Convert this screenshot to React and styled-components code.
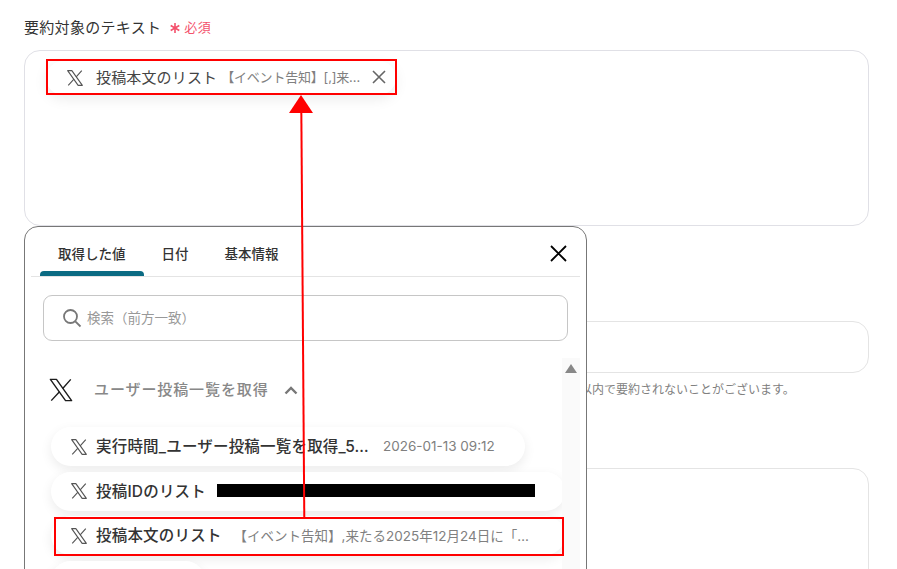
import React from "react";
import styled, {createGlobalStyle} from 'styled-components';

const GlobalStyle = createGlobalStyle`
  html, body {
    margin: 0;
    height: 569px;
    overflow: hidden;
    background: #fff;
    font-family: Inter, "Noto Sans CJK JP", "Noto Sans", sans-serif;
  }
`;

const XLogo = ({size, color, weight = 1.5}) => (
    <svg width={size} height={size} viewBox="0 0 24 24" fill="none" stroke={color} strokeWidth={weight} style={{flexShrink: 0}}>
        <path d="M2.2 2.2H7.8L21.8 21.8H16.2z" strokeLinejoin="round"/>
        <path d="M21 2.2L13.6 10.6M10.6 13.6L3 21.8"/>
    </svg>
);

const rows = [
    {id: 'time', label: '実行時間_ユーザー投稿一覧を取得_5…', value: '2026-01-13 09:12', width: 474, gap: 14},
    {id: 'post', label: '投稿IDのリスト', redacted: true, width: 514, gap: 11},
    {id: 'body', label: '投稿本文のリスト', value: '【イベント告知】,来たる2025年12月24日に「…', width: 514, gap: 12},
    {id: 'lang', width: 154},
];

const App = () => {
    return (
        <Page>
            <GlobalStyle/>
            <FieldLabel>
                要約対象のテキスト
                <Required>
                    <svg width="10" height="10" viewBox="0 0 10 10" stroke="#f4516c" strokeWidth="1.6">
                        <path d="M5 0v10M.7 2.5l8.6 5M9.3 2.5l-8.6 5"/>
                    </svg>
                    必須
                </Required>
            </FieldLabel>
            <TextArea>
                <TokenChip>
                    <XLogo size={18} color="#555"/>
                    <TokenName>投稿本文のリスト</TokenName>
                    <TokenValue>【イベント告知】[,]来…</TokenValue>
                    <TokenClose width="14" height="14" viewBox="0 0 14 14">
                        <path d="M1 1l12 12M13 1L1 13" stroke="#666" strokeWidth="1.6" fill="none"/>
                    </TokenClose>
                </TokenChip>
            </TextArea>
            <ShortInput/>
            <HelpText>指定した文字数以内で要約されないことがございます。</HelpText>
            <TallInput/>

            <Popup>
                <TabBar>
                    <Tab $active>取得した値</Tab>
                    <Tab>日付</Tab>
                    <Tab>基本情報</Tab>
                    <CloseIcon width="19" height="19" viewBox="0 0 19 19">
                        <path d="M2 2l15 15M17 2L2 17" stroke="#000" strokeWidth="1.8" fill="none"/>
                    </CloseIcon>
                </TabBar>
                <SearchBox>
                    <svg width="20" height="20" viewBox="0 0 20 20" fill="none" stroke="#777" strokeWidth="1.8">
                        <circle cx="8.5" cy="8.5" r="6.5"/>
                        <path d="M13.3 13.3L18.5 18.5"/>
                    </svg>
                    <Placeholder>検索（前方一致）</Placeholder>
                </SearchBox>
                <ScrollArea>
                    <ScrollContent>
                        <SectionHead>
                            <XLogo size={26} color="#1c1c1c" weight={1.3}/>
                            <SectionTitle>ユーザー投稿一覧を取得</SectionTitle>
                            <svg width="14" height="9" viewBox="0 0 14 9" fill="none" stroke="#777" strokeWidth="2.4">
                                <path d="M1.5 7.5L7 2l5.5 5.5"/>
                            </svg>
                        </SectionHead>
                        <RowList>
                            {rows.map(row => (
                                <Row key={row.id} $width={row.width}>
                                    <XLogo size={18} color="#555"/>
                                    {row.label && <RowName $gap={row.gap}>{row.label}</RowName>}
                                    {row.value && <RowValue>{row.value}</RowValue>}
                                    {row.redacted && <Redaction/>}
                                </Row>
                            ))}
                        </RowList>
                    </ScrollContent>
                    <ScrollBar>
                        <ScrollArrow/>
                    </ScrollBar>
                </ScrollArea>
            </Popup>

            <TokenHighlight/>
            <RowHighlight/>
            <ArrowLayer width="897" height="569" viewBox="0 0 897 569">
                <path d="M304.3 518L301.3 108" stroke="#f00" strokeWidth="2" fill="none"/>
                <path d="M301 95L313 113H289z" fill="#f00"/>
            </ArrowLayer>
        </Page>
    );
}

const Page = styled.div`
  position: relative;
  box-sizing: border-box;
  width: 897px;
  height: 569px;
  overflow: hidden;
  padding: 16px 28px 0 24px;
`;

const FieldLabel = styled.div`
  display: flex;
  align-items: center;
  height: 20px;
  font-size: 15px;
  letter-spacing: 0.3px;
  color: #333;
`;

const Required = styled.span`
  display: flex;
  align-items: center;
  gap: 4px;
  margin-left: 9px;
  font-size: 13px;
  letter-spacing: 0.5px;
  color: #f4516c;

  svg {
    margin-top: 3px;
  }
`;

const TextArea = styled.div`
  box-sizing: border-box;
  height: 176px;
  margin-top: 14px;
  padding: 10px 21px;
  border: 1px solid #e0e0e6;
  border-radius: 16px;
`;

const TokenChip = styled.div`
  box-sizing: border-box;
  display: flex;
  align-items: center;
  width: 350px;
  height: 34px;
  padding-left: 20px;
  border-radius: 17px;
  background: #fff;
  box-shadow: 0 4px 14px rgba(0, 0, 0, 0.08);
`;

const TokenName = styled.span`
  margin: 0 0 3px 12px;
  font-size: 15px;
  letter-spacing: 0.15px;
  color: #444;
  white-space: nowrap;
`;

const TokenValue = styled.span`
  margin: 0 0 3px 4px;
  font-size: 13px;
  letter-spacing: -0.2px;
  color: #808080;
  white-space: nowrap;
`;

const TokenClose = styled.svg`
  position: absolute;
  left: 372px;
  top: 70px;
`;

const ShortInput = styled.div`
  box-sizing: border-box;
  height: 52px;
  margin-top: 95px;
  border: 1px solid #e4e4e4;
  border-radius: 16px;
`;

const HelpText = styled.div`
  margin-top: 9px;
  padding-left: 472px;
  font-size: 12px;
  line-height: 16px;
  color: #808080;
  white-space: nowrap;
`;

const TallInput = styled.div`
  box-sizing: border-box;
  height: 160px;
  margin-top: 70px;
  border: 1px solid #e4e4e4;
  border-radius: 16px;
`;

const Popup = styled.div`
  position: absolute;
  left: 24px;
  top: 226px;
  box-sizing: border-box;
  width: 563px;
  height: 380px;
  padding: 0 6px;
  background: #fff;
  border: 1px solid #777;
  border-radius: 14px;
  display: flex;
  flex-direction: column;
`;

const TabBar = styled.div`
  position: relative;
  display: flex;
  flex-shrink: 0;
  height: 50px;
  box-sizing: border-box;
  padding-left: 9px;
  border-bottom: 1px solid #e4e4e4;
`;

const Tab = styled.div`
  position: relative;
  display: flex;
  align-items: center;
  justify-content: center;
  box-sizing: border-box;
  height: 49px;
  padding: 2px 18px 0;
  font-size: 13.5px;
  font-weight: 500;
  color: #333;

  &::after {
    content: '';
    display: ${props => (props.$active ? 'block' : 'none')};
    position: absolute;
    left: 0;
    right: 0;
    bottom: 0;
    height: 5px;
    background: #0b6b83;
    border-radius: 4px 4px 0 0;
  }
`;

const CloseIcon = styled.svg`
  position: absolute;
  right: 12px;
  top: 17px;
`;

const SearchBox = styled.div`
  box-sizing: border-box;
  display: flex;
  align-items: center;
  flex-shrink: 0;
  height: 46px;
  margin: 18px 12px 0;
  padding-left: 18px;
  border: 1px solid #c6c6c6;
  border-radius: 9px;
`;

const Placeholder = styled.span`
  margin: 0 0 2px 5px;
  font-size: 13.5px;
  color: #999;
`;

const ScrollArea = styled.div`
  display: flex;
  flex: 1;
  margin-top: 17px;
  min-height: 0;
`;

const ScrollContent = styled.div`
  flex: 1;
  min-width: 0;
  overflow: hidden;
`;

const SectionHead = styled.div`
  display: flex;
  align-items: center;
  height: 26px;
  margin-top: 19px;
  padding-left: 17px;
`;

const SectionTitle = styled.span`
  margin: 0 15px 3px 20px;
  font-size: 15px;
  letter-spacing: 0.9px;
  font-weight: 500;
  color: #888;
`;

const RowList = styled.div`
  display: flex;
  flex-direction: column;
  gap: 5.5px;
  margin-top: 24px;
  padding-left: 20px;
`;

const Row = styled.div`
  box-sizing: border-box;
  display: flex;
  align-items: center;
  flex-shrink: 0;
  width: ${props => props.$width}px;
  height: 39px;
  padding-left: 19px;
  border-radius: 20px;
  background: #fff;
  box-shadow: 0 4px 12px rgba(0, 0, 0, 0.08);
`;

const RowName = styled.span`
  margin: 0 ${props => props.$gap ?? 12}px 3px 8px;
  font-size: 15.5px;
  letter-spacing: 0.2px;
  font-weight: 500;
  color: #333;
  white-space: nowrap;
`;

const RowValue = styled.span`
  margin-bottom: 2px;
  font-size: 13.5px;
  color: #808080;
  white-space: nowrap;
`;

const Redaction = styled.div`
  width: 318px;
  height: 13px;
  margin-bottom: 2px;
  background: #000;
`;

const ScrollBar = styled.div`
  flex-shrink: 0;
  width: 18px;
  background: #fafafa;
`;

const ScrollArrow = styled.div`
  width: 0;
  height: 0;
  margin: 6px 0 0 3px;
  border-left: 6.5px solid transparent;
  border-right: 6.5px solid transparent;
  border-bottom: 9px solid #888;
`;

const TokenHighlight = styled.div`
  position: absolute;
  left: 46px;
  top: 59px;
  box-sizing: border-box;
  width: 351px;
  height: 36px;
  border: 2px solid #f00;
`;

const RowHighlight = styled.div`
  position: absolute;
  left: 54px;
  top: 517px;
  box-sizing: border-box;
  width: 510px;
  height: 39px;
  border: 2px solid #f00;
`;

const ArrowLayer = styled.svg`
  position: absolute;
  left: 0;
  top: 0;
  pointer-events: none;
`;

export default App;
